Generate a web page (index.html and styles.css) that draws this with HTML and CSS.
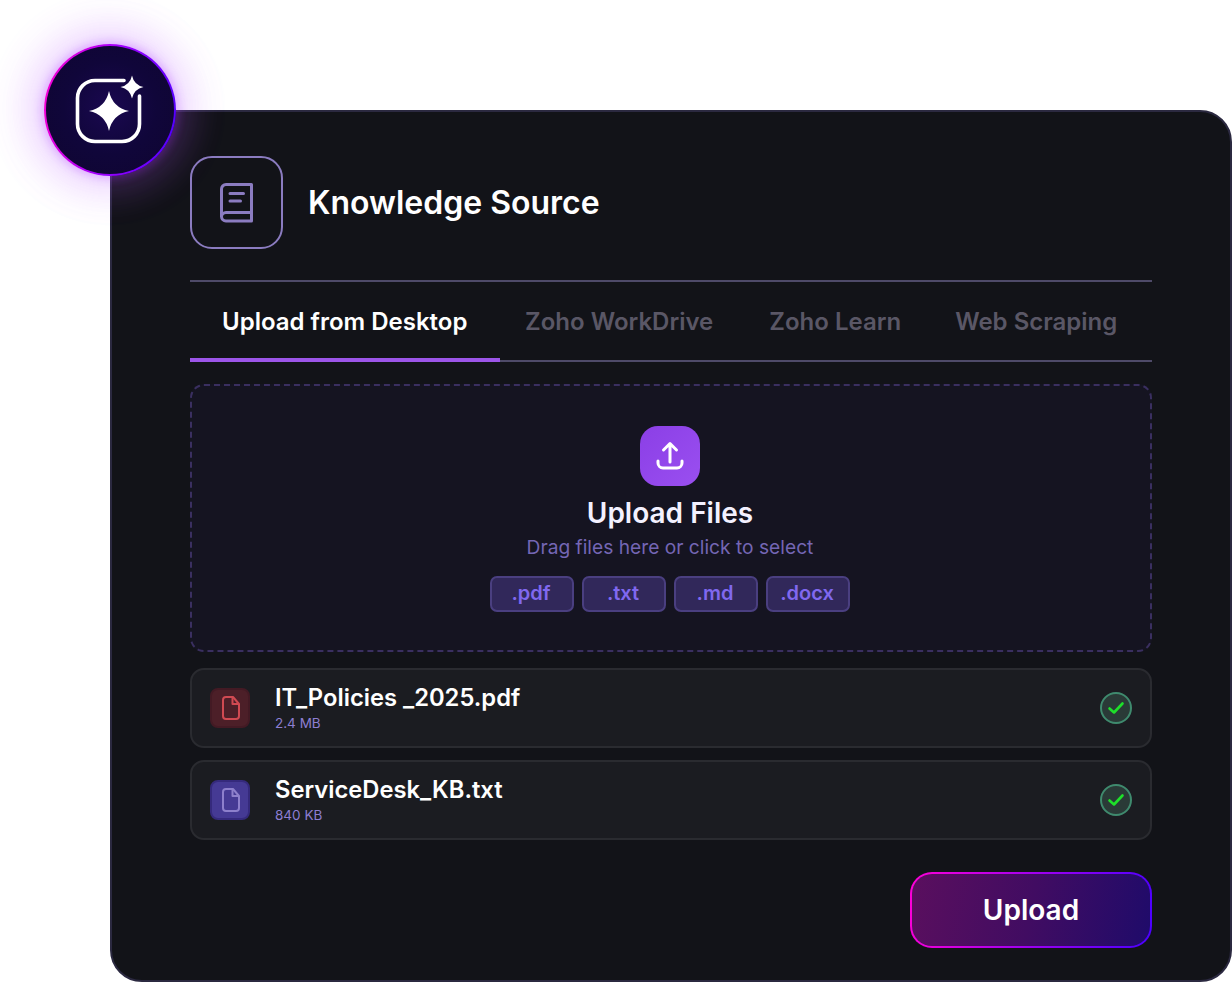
FILE: index.html
```html
<!DOCTYPE html>
<html lang="en">
<head>
<meta charset="utf-8">
<title>Knowledge Source</title>
<link rel="stylesheet" href="styles.css">
</head>
<body>
<main class="card">
  <div class="badge">
    <svg class="badge-icon" width="72" height="72" viewBox="0 0 72 72" fill="none">
      <path d="M50 6.500H21A17.500 17.500 0 0 0 3.500 24V50A17.500 17.500 0 0 0 21 67.500H48A17.500 17.500 0 0 0 65.500 50V22" stroke="#fff" stroke-width="3.600" stroke-linecap="round"/>
      <path d="M35 17Q38.500 33.500 55 37Q38.500 40.500 35 57Q31.500 40.500 15 37Q31.500 33.500 35 17Z" fill="#fff"/>
      <path d="M58 1.500Q60 11 69.500 13Q60 15 58 24.500Q56 15 46.500 13Q56 11 58 1.500Z" fill="#fff"/>
    </svg>
  </div>

  <header class="header">
    <div class="header-icon">
      <svg width="34" height="40" viewBox="0 0 34 40" fill="none" stroke="#8b7cc0" stroke-width="3">
        <path d="M6 1.500H31.500V38H6A4.500 4.500 0 0 1 1.500 33.500V6A4.500 4.500 0 0 1 6 1.500Z" stroke-linejoin="round"/>
        <path d="M1.500 33.500A4.500 4.500 0 0 1 6 29.500H31.500"/>
        <path d="M10 10.500H23.500M10 18H20.500" stroke-linecap="round"/>
      </svg>
    </div>
    <h1 class="title">Knowledge Source</h1>
  </header>

  <nav class="tabs">
    <a class="tab tab-active">Upload from Desktop</a>
    <a class="tab">Zoho WorkDrive</a>
    <a class="tab">Zoho Learn</a>
    <a class="tab">Web Scraping</a>
  </nav>

  <section class="drop">
    <div class="drop-icon">
      <svg width="60" height="60" viewBox="0 0 60 60" fill="none" stroke="#fff" stroke-width="3" stroke-linecap="round" stroke-linejoin="round">
        <path d="M30 18V36M23.500 24L30 17.500L36.500 24"/>
        <path d="M18 35V37A5 5 0 0 0 23 42H37A5 5 0 0 0 42 37V35"/>
      </svg>
    </div>
    <h2 class="drop-title">Upload Files</h2>
    <p class="drop-sub">Drag files here or click to select</p>
    <div class="chips">
      <span class="chip">.pdf</span>
      <span class="chip">.txt</span>
      <span class="chip">.md</span>
      <span class="chip">.docx</span>
    </div>
  </section>

  <ul class="files">
    <li class="file">
      <div class="file-icon file-icon-red">
        <svg width="40" height="40" viewBox="0 0 40 40" fill="none" stroke="#d04a52" stroke-width="2" stroke-linejoin="round">
          <path d="M16 9H23L29 16V28A3 3 0 0 1 26 31H16A3 3 0 0 1 13 28V12A3 3 0 0 1 16 9Z"/>
          <path d="M22.500 9V16H29"/>
        </svg>
      </div>
      <div class="file-text">
        <div class="file-name">IT_Policies _2025.pdf</div>
        <div class="file-size">2.4 MB</div>
      </div>
      <div class="check">
        <svg width="28" height="28" viewBox="0 0 28 28" fill="none" stroke="#1ee02a" stroke-width="2.600" stroke-linecap="round" stroke-linejoin="round">
          <path d="M7.500 14.500L12 18.500L20.500 9.500"/>
        </svg>
      </div>
    </li>
    <li class="file">
      <div class="file-icon file-icon-violet">
        <svg width="40" height="40" viewBox="0 0 40 40" fill="none" stroke="#8d80cc" stroke-width="2" stroke-linejoin="round">
          <path d="M16 9H23L29 16V28A3 3 0 0 1 26 31H16A3 3 0 0 1 13 28V12A3 3 0 0 1 16 9Z"/>
          <path d="M22.500 9V16H29"/>
        </svg>
      </div>
      <div class="file-text">
        <div class="file-name">ServiceDesk_KB.txt</div>
        <div class="file-size">840 KB</div>
      </div>
      <div class="check">
        <svg width="28" height="28" viewBox="0 0 28 28" fill="none" stroke="#1ee02a" stroke-width="2.600" stroke-linecap="round" stroke-linejoin="round">
          <path d="M7.500 14.500L12 18.500L20.500 9.500"/>
        </svg>
      </div>
    </li>
  </ul>

  <div class="actions">
    <button class="upload">Upload</button>
  </div>
</main>
</body>
</html>
```

FILE: styles.css
```css
* { box-sizing: border-box; }
html, body { margin: 0; padding: 0; background: #fff; }
body {
  font-family: "Inter", "Noto Sans", sans-serif;
  width: 1232px;
  height: 982px;
  overflow: hidden;
  padding: 110px 0 0 110px;
}
.card {
  position: relative;
  width: 1122px;
  height: 872px;
  background: #121318;
  border: 2px solid #2b2940;
  border-radius: 32px;
  padding: 44px 78px 0;
}
.badge {
  position: absolute;
  left: -68px;
  top: -68px;
  width: 132px;
  height: 132px;
  border-radius: 50%;
  display: flex;
  align-items: center;
  justify-content: center;
  border: 2px solid transparent;
  background:
    radial-gradient(circle at 50% 48%, #1a0850 0%, #10063a 50%, #0f0530 100%) padding-box,
    linear-gradient(100deg, #ff00d0 0%, #a000ff 50%, #4a00ff 100%) border-box;
  box-shadow:
    0 0 10px 2px rgba(170, 40, 255, .3),
    0 0 38px 14px rgba(170, 80, 255, .2),
    -3px -2px 40px 20px rgba(215, 100, 255, .08);
}
.header {
  display: flex;
  align-items: center;
  gap: 25px;
  height: 93px;
  margin-bottom: 31px;
}
.header-icon {
  width: 93px;
  height: 93px;
  border: 2px solid #8b7cc0;
  border-radius: 22px;
  display: flex;
  align-items: center;
  justify-content: center;
}
.title {
  margin: 0;
  color: #fff;
  font-size: 32px;
  font-weight: 600;
}
.tabs {
  display: flex;
  height: 82px;
  border-top: 2px solid #4e4a68;
  border-bottom: 2px solid #4e4a68;
}
.tab {
  display: flex;
  align-items: center;
  height: 80px;
  padding: 0 31px 2px 25px;
  color: #5a5766;
  font-size: 24px;
  font-weight: 600;
  white-space: nowrap;
}
.tab:nth-child(3) { padding-right: 29px; }
.tab-active {
  width: 310px;
  padding: 2px 0 0 32px;
  color: #fff;
  border-bottom: 4px solid #9c55e8;
}
.drop {
  margin-top: 22px;
  height: 268px;
  background: #151421;
  border: 2px dashed #3a2f60;
  border-radius: 14px;
  display: flex;
  flex-direction: column;
  align-items: center;
  padding: 40px 2px 0 0;
}
.drop-icon {
  width: 60px;
  height: 60px;
  border-radius: 18px;
  background: linear-gradient(135deg, #8b3fe6, #9a4ff0);
}
.drop-title {
  margin: 10px 0 0;
  color: #f3f1ff;
  font-size: 28px;
  line-height: 34px;
  font-weight: 600;
}
.drop-sub {
  margin: 4px 0 0;
  color: #7466b4;
  font-size: 19.200px;
  line-height: 26px;
  font-weight: 400;
}
.chips {
  display: flex;
  gap: 8px;
  margin-top: 16px;
}
.chip {
  width: 84px;
  height: 36px;
  display: flex;
  align-items: center;
  justify-content: center;
  padding: 0 2px 2px 0;
  background: #31285a;
  border: 2px solid #4a3f80;
  border-radius: 7px;
  color: #8068f0;
  font-size: 20px;
  font-weight: 600;
}
.files {
  list-style: none;
  margin: 16px 0 0;
  padding: 0;
  display: flex;
  flex-direction: column;
  gap: 12px;
}
.file {
  height: 80px;
  display: flex;
  align-items: center;
  padding: 0 18px;
  background: #1b1c21;
  border: 2px solid #2a2b30;
  border-radius: 14px;
}
.file-icon {
  width: 40px;
  height: 40px;
  border-radius: 8px;
  border: 2px solid transparent;
  flex: none;
}
.file-icon svg { margin: -2px; display: block; }
.file-icon-red { background: #4c1f28; border-color: #431a24; }
.file-icon-violet { background: #453a94; border-color: #352a7c; }
.file-text {
  margin-left: 25px;
  flex: 1;
}
.file-name {
  color: #fff;
  font-size: 23.750px;
  line-height: 30px;
  font-weight: 600;
}
.file-size {
  color: #8d7ed2;
  font-size: 13.500px;
  line-height: 20px;
}
.check {
  width: 32px;
  height: 32px;
  border-radius: 50%;
  background: #2a3a37;
  border: 2px solid #3f8a6e;
  display: flex;
  align-items: center;
  justify-content: center;
}
.actions {
  display: flex;
  justify-content: flex-end;
  margin-top: 32px;
}
.upload {
  width: 242px;
  height: 76px;
  border: 2px solid transparent;
  border-radius: 22px;
  background:
    linear-gradient(100deg, #5a0f5e 0%, #410c62 50%, #1f0b6a 100%) padding-box,
    linear-gradient(100deg, #ff00d8 0%, #a000f0 50%, #4a00ff 100%) border-box;
  color: #fff;
  font-family: inherit;
  font-size: 28px;
  font-weight: 600;
}
```
